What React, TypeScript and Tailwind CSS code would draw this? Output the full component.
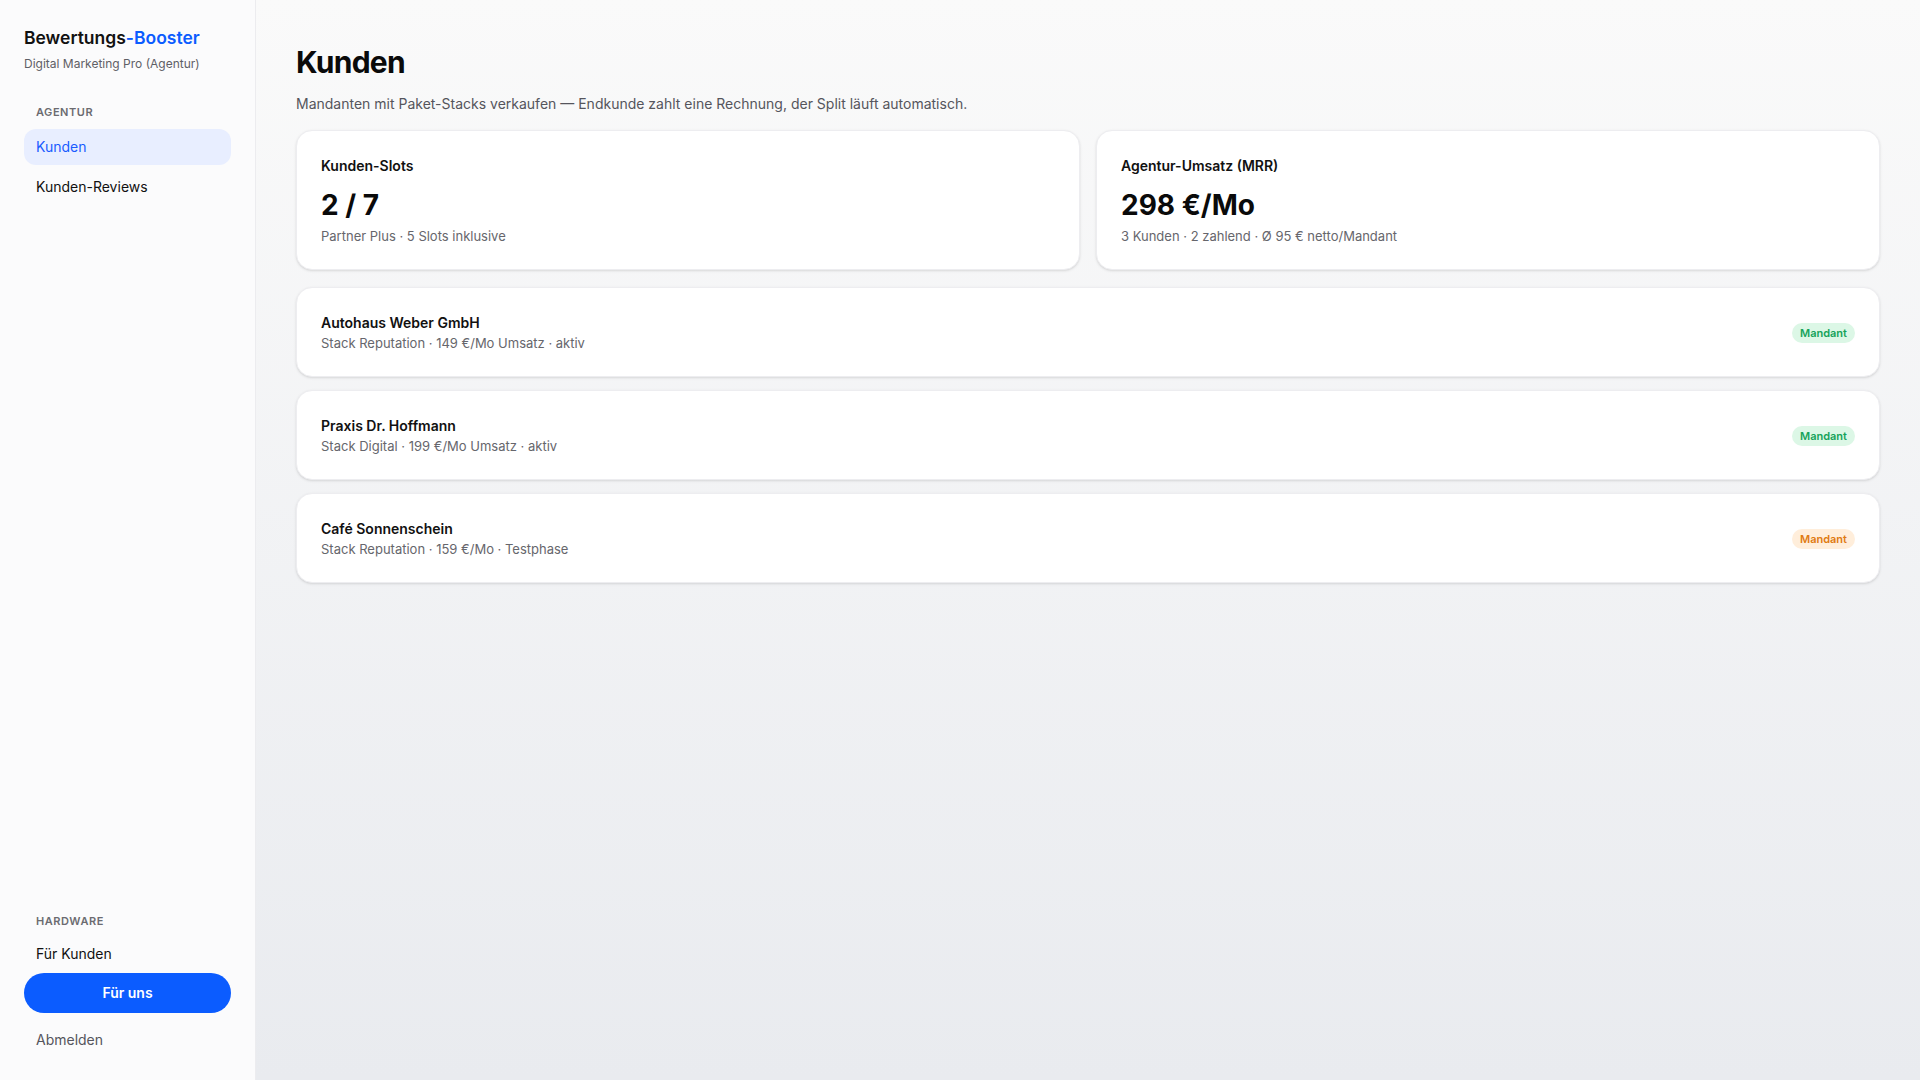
type Client = {
  name: string
  detail: string
  tone: 'green' | 'orange'
};

const clients: Client[] = [
  { name: 'Autohaus Weber GmbH', detail: 'Stack Reputation · 149 €/Mo Umsatz · aktiv', tone: 'green' },
  { name: 'Praxis Dr. Hoffmann', detail: 'Stack Digital · 199 €/Mo Umsatz · aktiv', tone: 'green' },
  { name: 'Café Sonnenschein', detail: 'Stack Reputation · 159 €/Mo · Testphase', tone: 'orange' },
];

const Sidebar = () => {
  return (
    <aside className="w-64 shrink-0 h-screen flex flex-col justify-between border-r border-[#ececef] bg-[#fbfbfc] p-6">
      <div>
        <div className="pt-0.5">
          <h1 className="text-[17.5px] font-semibold leading-6 text-[#111]">
            Bewertungs<span className="text-[#0b5cff]">-Booster</span>
          </h1>
          <p className="mt-1.5 text-xs text-[#5f5f66]">Digital Marketing Pro (Agentur)</p>
        </div>

        <div className="mt-8">
          <p className="px-3 text-[11px] font-semibold tracking-wider text-[#6b6b70]">AGENTUR</p>
          <nav className="mt-2 space-y-1">
            <a className="block rounded-xl bg-[#e8eeff] px-3 py-2 text-sm leading-5 text-[#1a5cff]">Kunden</a>
            <a className="block rounded-xl px-3 py-2 text-sm leading-5 text-[#111]">Kunden-Reviews</a>
          </nav>
        </div>
      </div>

      <div>
        <p className="px-3 text-[11px] font-semibold tracking-wider text-[#6b6b70]">HARDWARE</p>
        <nav className="mt-[7px]">
          <a className="block rounded-xl px-3 py-2 text-sm leading-5 text-[#111]">Für Kunden</a>
          <button className="mt-px block w-full rounded-full bg-[#0b5cff] py-2.5 text-sm font-semibold leading-5 text-white">
            Für uns
          </button>
          <a className="mt-[5px] block rounded-xl px-3 pt-3 pb-1.5 text-sm leading-5 text-[#55555c]">Abmelden</a>
        </nav>
      </div>
    </aside>
  )
}

const StatCard = ({ label, value, sub }: { label: string, value: string, sub: string }) => (
  <div className="rounded-2xl border border-[#ededf0] bg-white px-6 pt-[25px] pb-6 shadow-sm">
    <p className="text-sm font-semibold leading-5 text-[#111]">{label}</p>
    <p className="mt-[11px] text-[28px] font-bold leading-9 text-[#0a0a0a]">{value}</p>
    <p className="mt-1 text-[13px] leading-[18px] text-[#66666c]">{sub}</p>
  </div>
)

const ClientRow = ({ client }: { client: Client }) => (
  <div className="flex items-center justify-between rounded-2xl border border-[#ededf0] bg-white px-6 pt-[25px] pb-[23px] shadow-sm">
    <div>
      <p className="text-sm font-semibold leading-5 text-[#111]">{client.name}</p>
      <p className="text-[13px] leading-5 text-[#66666c]">{client.detail}</p>
    </div>
    <span
      className={
        client.tone === 'green'
          ? 'rounded-full bg-[#dcf7e6] px-2 py-[3px] text-[11px] font-semibold leading-[14px] text-[#16a35a]'
          : 'rounded-full bg-[#ffeedb] px-2 py-[3px] text-[11px] font-semibold leading-[14px] text-[#e07b12]'
      }
    >
      Mandant
    </span>
  </div>
)

export default function App() {
  return (
    <div className="flex h-screen w-full font-['Inter',sans-serif] antialiased">
      <Sidebar />

      <main className="flex-1 h-screen bg-gradient-to-b from-[#fafafa] to-[#e9ebef] px-10 pt-11">
        <h2 className="text-3xl font-bold leading-9 tracking-tight text-[#0a0a0a]">Kunden</h2>
        <p className="mt-3.5 text-sm leading-5 text-[#55555c]">
          Mandanten mit Paket-Stacks verkaufen — Endkunde zahlt eine Rechnung, der Split läuft automatisch.
        </p>

        <div className="mt-4 grid grid-cols-2 gap-4">
          <StatCard label="Kunden-Slots" value="2 / 7" sub="Partner Plus · 5 Slots inklusive" />
          <StatCard label="Agentur-Umsatz (MRR)" value="298 €/Mo" sub="3 Kunden · 2 zahlend · Ø 95 € netto/Mandant" />
        </div>

        <div className="mt-[17px] flex flex-col gap-[13px]">
          {clients.map((c) => (
            <ClientRow key={c.name} client={c} />
          ))}
        </div>
      </main>
    </div>
  )
}
